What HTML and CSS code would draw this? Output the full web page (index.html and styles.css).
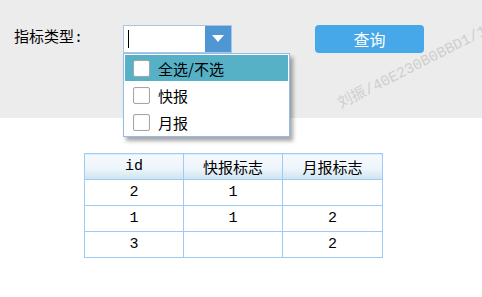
FILE: index.html
```html
<!DOCTYPE html>
<html>
<head>
    <meta charset="utf-8">
    <link rel="stylesheet" href="styles.css">
</head>
<body>
    <div class="search-bar">
        <span class="field-label">指标类型:</span>
        <div class="combo">
            <div class="combo-input"><span class="caret"></span></div>
            <div class="combo-arrow">
                <svg viewBox="0 0 12 8" width="12" height="8"><path d="M0 0h12L6 7z" fill="#fff"/></svg>
            </div>
            <ul class="combo-list">
                <li class="item selected"><span class="check"></span>全选/不选</li>
                <li class="item"><span class="check"></span>快报</li>
                <li class="item"><span class="check"></span>月报</li>
            </ul>
        </div>
        <button class="query-btn">查询</button>
        <div class="watermark">刘振/40E230B0BBD1/1</div>
    </div>

    <table class="result">
        <thead>
            <tr><th>id</th><th>快报标志</th><th>月报标志</th></tr>
        </thead>
        <tbody>
            <tr><td>2</td><td>1</td><td></td></tr>
            <tr><td>1</td><td>1</td><td>2</td></tr>
            <tr><td>3</td><td></td><td>2</td></tr>
        </tbody>
    </table>
</body>
</html>
```

FILE: styles.css
```css
body {
    margin: 0;
    width: 482px;
    height: 297px;
    overflow: hidden;
    background: #fff;
    color: #000;
    font-family: "Liberation Mono", "Noto Sans CJK SC", monospace;
    font-size: 14px;
}

.search-bar {
    position: relative;
    height: 118px;
    box-sizing: border-box;
    padding: 25px 0 0 14px;
    background: #ececec;
    display: flex;
    align-items: flex-start;
}

.field-label {
    width: 109px;
    height: 28px;
    line-height: 28px;
    font-size: 15px;
}

.combo {
    position: relative;
    display: flex;
    width: 109px;
    height: 28px;
    box-sizing: border-box;
    border: 1px solid #a9c6e6;
    background: #fff;
    z-index: 2;
}

.combo-input {
    flex: 1;
    display: flex;
    align-items: center;
    padding-left: 4px;
}

.caret {
    width: 1px;
    height: 18px;
    background: #000;
}

.combo-arrow {
    width: 26px;
    background: #4f97d3;
    display: flex;
    align-items: center;
    justify-content: center;
}

.combo-list {
    position: absolute;
    top: 27px;
    left: -1px;
    width: 167px;
    margin: 0;
    padding: 1px;
    list-style: none;
    box-sizing: border-box;
    border: 1px solid #94bcea;
    background: #fff;
    box-shadow: 3px 4px 4px rgba(0, 0, 0, 0.35);
    font-family: "Noto Sans CJK SC", sans-serif;
    font-size: 15px;
}

.item {
    display: flex;
    align-items: center;
    gap: 8px;
    height: 26px;
    margin-bottom: 1px;
    padding-left: 8px;
}

.item:last-child {
    margin-bottom: 0;
}

.item.selected {
    background: #56b1c7;
}

.check {
    width: 15px;
    height: 15px;
    border: 1px solid #a6a6a6;
    border-radius: 2px;
    background: #fff;
    box-shadow: inset 0 0 1px #ccc;
}

.query-btn {
    margin-left: 83px;
    width: 109px;
    height: 28px;
    border: none;
    border-radius: 4px;
    background: #46a8e9;
    color: #fff;
    font-family: "Noto Sans CJK SC", sans-serif;
    font-size: 16px;
    padding: 0;
}

.watermark {
    position: absolute;
    left: 343px;
    top: 97px;
    line-height: 16px;
    transform: rotate(-27deg);
    transform-origin: left bottom;
    color: #cfcfcf;
    font-family: "Liberation Mono", "Noto Sans CJK SC", monospace;
    font-size: 15px;
    white-space: nowrap;
}

.result {
    margin: 35px 0 0 84px;
    border-collapse: collapse;
    font-size: 15px;
}

.result th,
.result td {
    border: 1px solid #9ccbf7;
    height: 25px;
    padding: 0;
    text-align: center;
    font-weight: normal;
}

.result th {
    background: linear-gradient(#f4f9fd, #eef5fb 55%, #cfe4ef);
}

.result th:nth-child(1),
.result th:nth-child(2) {
    width: 98px;
}

.result th:nth-child(3) {
    width: 99px;
}
```
